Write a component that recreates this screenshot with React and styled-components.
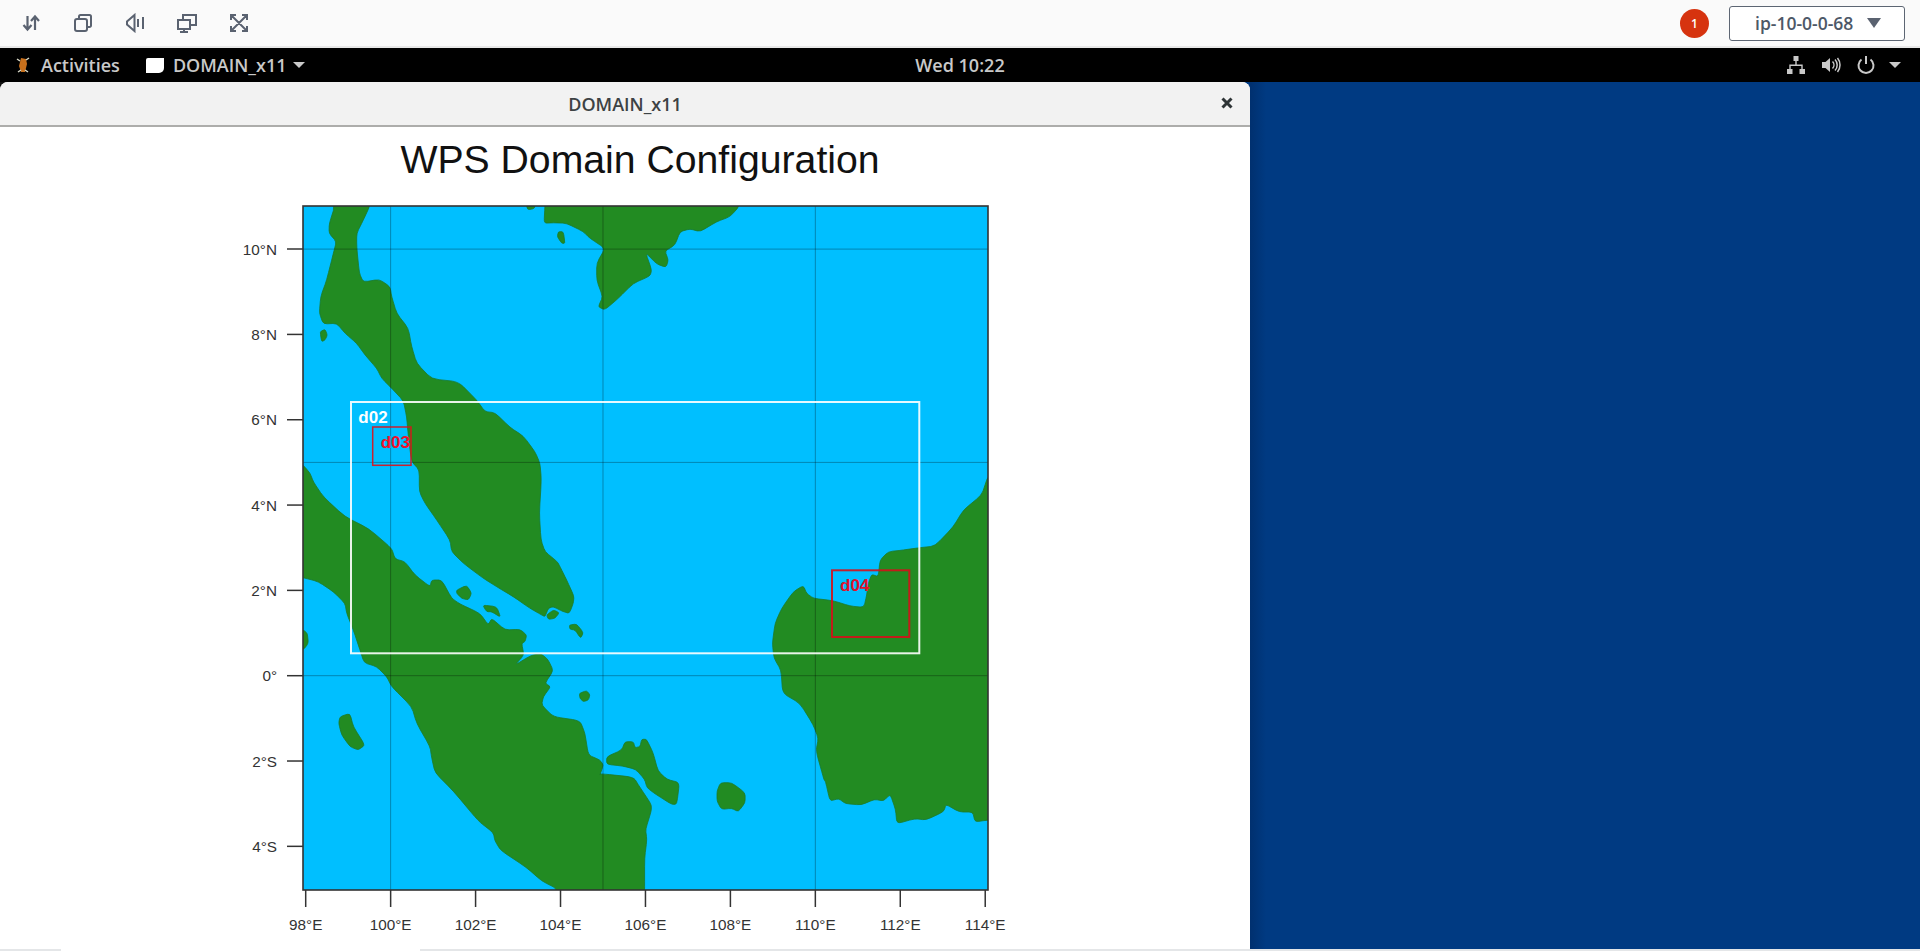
import styled, { createGlobalStyle } from 'styled-components';

const GlobalStyle = createGlobalStyle`
    html, body {
        margin: 0;
        padding: 0;
        height: 100%;
        overflow: hidden;
        background: #fff;
        font-family: "Open Sans", "Liberation Sans", sans-serif;
    }
`;

// crop origin + scale the coastlines were traced in, turned into page pixels
const from = (ox, oy, sx, sy, pts) => pts.map(([x, y]) => [ox + x / sx, oy + y / sy]);
const a = pts => from(220, 190, 3, 3, pts);
const b = pts => from(220, 480, 3, 3, pts);
const c = pts => from(600, 190, 3, 3, pts);
const d = pts => from(600, 480, 3, 3, pts);
const e = pts => from(220, 751, 3, 3, pts);
const f = pts => from(600, 751, 2.24, 3, pts);

// only softens the traced corners, so small islands keep their size
const toPath = pts => {
    const t = 0.28;
    const lerp = (p, q, k) => `${(p[0] + (q[0] - p[0]) * k).toFixed(1)} ${(p[1] + (q[1] - p[1]) * k).toFixed(1)}`;
    let path = '';
    pts.forEach((p, i) => {
        const prev = pts[(i - 1 + pts.length) % pts.length];
        const next = pts[(i + 1) % pts.length];
        path += `${i ? 'L' : 'M'}${lerp(p, prev, t)}Q${p[0].toFixed(1)} ${p[1].toFixed(1)} ${lerp(p, next, t)}`;
    });
    return path + 'Z';
};

const land = [
    // Malay peninsula
    [
        [300, 150],
        ...a([[345, 47], [328, 100], [327, 130], [349, 155], [340, 190], [320, 270], [302, 320], [298, 370], [310, 402], [350, 400], [375, 430], [410, 460], [435, 495], [470, 535], [485, 565], [520, 600], [550, 632], [560, 680], [565, 740], [575, 815], [598, 840]]),
        ...b([[598, 35], [615, 70], [650, 120], [690, 180], [695, 215], [730, 250], [790, 295], [830, 320], [880, 350], [930, 385], [965, 405], [975, 410], [985, 385], [1000, 380], [1030, 395], [1048, 400], [1060, 370], [1062, 348], [1040, 300], [1020, 260], [1012, 245], [975, 215], [963, 180], [958, 100], [964, 0]]),
        ...a([[960, 820], [945, 785], [910, 738], [870, 712], [825, 668], [795, 665], [770, 630], [715, 575], [635, 567], [590, 520], [575, 470], [565, 415], [530, 370], [515, 320], [510, 290], [478, 268], [430, 276], [418, 250], [410, 170], [410, 130], [430, 90], [450, 47]]),
        [380, 150],
    ],
    // Sumatra
    [
        [260, 440], [303, 465], [310, 473],
        ...b([[280, 5], [310, 50], [375, 110], [445, 145], [515, 205], [525, 237], [555, 245], [585, 285], [630, 320], [635, 300], [665, 300], [695, 355], [720, 372], [780, 400], [805, 435], [815, 415], [855, 450], [900, 448], [920, 465], [915, 485], [905, 490], [912, 525], [885, 555], [935, 525], [965, 522], [985, 540], [1000, 572], [975, 610], [992, 620], [970, 650], [965, 675], [1000, 710], [1080, 722], [1095, 760], [1105, 825], [1140, 840], [1150, 855], [1140, 885]]),
        ...f([[0, 68], [75, 78], [90, 110], [115, 160], [115, 180], [102, 235], [105, 265], [100, 320], [100, 418]]),
        [644, 960], [558, 960],
        ...e([[1015, 415], [965, 390], [920, 350], [842, 298], [825, 270], [820, 245], [775, 210], [700, 120], [645, 65], [635, 20]]),
        ...b([[630, 800], [590, 730], [575, 680], [515, 620], [500, 590], [470, 560], [432, 548], [420, 510], [400, 450], [380, 400], [375, 370], [340, 335], [295, 305], [250, 293]]),
        [260, 570],
    ],
    // Borneo
    [
        [1060, 440],
        ...d([[1165, -10], [1160, 0], [1145, 45], [1090, 90], [1060, 140], [1005, 198], [960, 203], [910, 210], [865, 215], [840, 240], [835, 290], [815, 283], [805, 310], [800, 345], [792, 382], [750, 378], [700, 362], [640, 355], [620, 340], [610, 317], [580, 335], [545, 385], [525, 430], [517, 490], [522, 535], [543, 570], [548, 640], [600, 670], [640, 735], [655, 775], [648, 812], [672, 900]]),
        ...f([[505, 90], [515, 150], [535, 143], [550, 158], [585, 162], [615, 145], [635, 150], [650, 130], [662, 175], [665, 218], [705, 203], [730, 207], [770, 182], [775, 160], [805, 183], [835, 183], [840, 213], [868, 207]]),
        [1060, 820],
    ],
    // Indochina, top edge
    [
        [545, 150],
        ...a([[975, 47], [972, 100], [1000, 98], [1040, 100], [1090, 125], [1110, 145], [1155, 175], [1130, 220], [1130, 270], [1148, 320], [1135, 350], [1150, 358]]),
        ...c([[20, 355], [55, 325], [100, 280], [150, 258], [155, 240], [137, 188], [170, 222], [198, 232], [205, 210], [195, 183], [225, 165], [240, 125], [270, 117], [300, 125], [350, 95], [390, 80], [420, 47]]),
        [740, 150],
    ],
    // Bangka
    [
        ...d([[20, 830], [65, 810], [75, 785], [100, 785], [105, 803], [120, 800], [125, 778], [140, 778], [160, 820]]),
        ...f([[130, 60], [150, 85], [178, 95], [172, 160], [160, 160], [125, 130], [105, 110], [100, 85], [80, 55], [50, 45], [15, 40]]),
    ],
    f([[270, 95], [295, 95], [325, 125], [325, 155], [310, 182], [295, 172], [272, 175], [262, 150], [262, 120]]),
    b([[360, 710], [390, 700], [400, 740], [435, 795], [415, 810], [390, 800], [365, 765], [356, 730]]),
    b([[710, 330], [740, 316], [755, 340], [745, 360], [725, 355], [710, 340]]),
    b([[788, 375], [830, 380], [842, 412], [815, 395], [800, 395]]),
    b([[980, 405], [1000, 390], [1018, 398], [1005, 415], [985, 418]]),
    b([[1048, 435], [1070, 432], [1090, 458], [1082, 475], [1065, 450], [1050, 448]]),
    b([[1078, 640], [1100, 632], [1110, 645], [1105, 660], [1090, 665], [1080, 655]]),
    b([[200, 450], [250, 450], [262, 460], [265, 490], [250, 510], [200, 510]]),
    a([[1015, 125], [1030, 125], [1035, 160], [1025, 160], [1012, 140]]),
    a([[915, 20], [922, 60], [945, 55], [945, 20]]),
    a([[300, 425], [315, 418], [322, 435], [315, 450], [305, 455]]),
];

const lonX = lon => 305.7 + (lon - 98) * 42.47;
const latY = lat => 675.7 - lat * 42.66;
const lonTicks = [98, 100, 102, 104, 106, 108, 110, 112, 114];
const latTicks = [
    [10, '10°N'], [8, '8°N'], [6, '6°N'], [4, '4°N'], [2, '2°N'],
    [0, '0°'], [-2, '2°S'], [-4, '4°S'],
];

const Page = styled.div`
    width: 1920px;
    height: 951px;
    display: flex;
    flex-direction: column;
    overflow: hidden;
`;

const Toolbar = styled.header`
    height: 46px;
    flex: none;
    display: flex;
    align-items: center;
    padding: 0 15px 0 5px;
    background: #fafafa;
    border-bottom: 2px solid #e8e8e8;
`;

const ToolButton = styled.button`
    width: 52px;
    height: 40px;
    padding: 0;
    border: 0;
    background: none;
    display: flex;
    align-items: center;
    justify-content: center;
    color: #5a6270;
`;

const ToolIcon = styled.svg`
    width: 20px;
    height: 20px;
    fill: none;
    stroke: currentColor;
    stroke-width: 2;
`;

const Spacer = styled.div`
    flex: 1;
`;

const Badge = styled.span`
    width: 29px;
    height: 29px;
    margin-right: 20px;
    border-radius: 50%;
    background: #d6330f;
    color: #fff;
    font-size: 12px;
    font-weight: 600;
    display: flex;
    align-items: center;
    justify-content: center;
`;

const HostSelect = styled.div`
    width: 176px;
    height: 35px;
    box-sizing: border-box;
    border: 1px solid #5d6673;
    border-radius: 3px;
    background: #fff;
    color: #4d5867;
    font-size: 17.5px;
    font-weight: 600;
    display: flex;
    align-items: center;
    padding-left: 25px;
    gap: 14px;
`;

const HostCaret = styled.span`
    width: 0;
    height: 0;
    border-left: 7px solid transparent;
    border-right: 7px solid transparent;
    border-top: 10px solid #5a6270;
`;

const ShellBar = styled.div`
    height: 34px;
    flex: none;
    display: grid;
    grid-template-columns: 1fr auto 1fr;
    align-items: center;
    background: #000;
    color: #c9c9c9;
    font-size: 18px;
    font-weight: 600;
`;

const ShellLeft = styled.div`
    display: flex;
    align-items: center;
    padding-left: 16px;
`;

const ShellRight = styled.div`
    display: flex;
    align-items: center;
    justify-content: flex-end;
    gap: 15px;
    padding-right: 19px;
`;

const ShellLabel = styled.span`
    margin-left: ${p => p.$gap || 0}px;
`;

const AppSquare = styled.span`
    width: 18px;
    height: 15px;
    margin-left: 26px;
    background: #fff;
    border-radius: 2px 0 5px 0;
`;

const ShellCaret = styled.span`
    width: 0;
    height: 0;
    margin-left: ${p => p.$gap ?? 7}px;
    border-left: 6px solid transparent;
    border-right: 6px solid transparent;
    border-top: 6px solid #c9c9c9;
`;

const ShellIcon = styled.svg`
    width: 20px;
    height: 20px;
    color: #c9c9c9;
`;

const Desktop = styled.div`
    flex: 1;
    display: flex;
    min-height: 0;
    background: linear-gradient(90deg, #111 0 20px, #003a82 20px);
`;

const AppWindow = styled.section`
    width: 1250px;
    display: flex;
    flex-direction: column;
    background: #fff;
    border-radius: 8px 8px 0 0;
    overflow: hidden;
`;

const TitleBar = styled.div`
    height: 43px;
    flex: none;
    position: relative;
    display: flex;
    align-items: center;
    justify-content: center;
    background: #f2f2f2;
    border-bottom: 2px solid #adadab;
    color: #3d4244;
    font-size: 18px;
    font-weight: 600;
`;

const CloseIcon = styled.svg`
    position: absolute;
    right: 17px;
    top: 15px;
    width: 12px;
    height: 12px;
    stroke: #2e3436;
    stroke-width: 3;
`;

const PlotTitle = styled.h1`
    height: 63px;
    margin: 0;
    padding-left: 30px;
    box-sizing: border-box;
    text-align: center;
    font-family: "Liberation Sans", Arial, sans-serif;
    font-size: 39.2px;
    font-weight: 400;
    line-height: 66px;
    color: #111;
`;

const Plot = styled.svg`
    display: block;
    width: 800px;
    height: 750px;
    margin-left: 220px;
`;

const Ocean = styled.rect`
    fill: #00bfff;
`;

const Land = styled.path`
    fill: #228b22;
    stroke: #1c7a2a;
    stroke-width: 0.8;
    stroke-linejoin: round;
`;

const GridLine = styled.line`
    stroke: #000;
    stroke-opacity: 0.3;
    stroke-width: 1;
`;

const Tick = styled.line`
    stroke: #333;
    stroke-width: 1.5;
`;

const AxisLabel = styled.text`
    font-family: "Liberation Sans", Arial, sans-serif;
    font-size: 15.3px;
    fill: #333;
`;

const DomainBox = styled.rect`
    fill: none;
    stroke: ${p => p.$color};
    stroke-width: ${p => p.$width || 1.5};
    stroke-opacity: 0.9;
`;

const DomainLabel = styled.text`
    font-family: "Liberation Sans", Arial, sans-serif;
    font-size: 17px;
    font-weight: 700;
    fill: ${p => p.$color};
`;

const Frame = styled.rect`
    fill: none;
    stroke: #333;
    stroke-width: 1.6;
`;

const BlueSide = styled.div`
    flex: 1;
    background: linear-gradient(90deg, #00306f, #003a82 16px);
`;

const TaskStrip = styled.div`
    height: 2px;
    flex: none;
    background: #e4e6e8;
    padding-left: 61px;
`;

const TaskTab = styled.div`
    width: 359px;
    height: 2px;
    background: #fff;
`;

const App = () => {
    return (
        <Page>
            <GlobalStyle />
            <Toolbar>
                <ToolButton>
                    <ToolIcon viewBox="0 0 20 20">
                        <path d="M6.5 3v13M2.5 12l4 4.5 4-4.5M14 17V4M10 8l4-4.5L18 8" strokeWidth="2.2" />
                    </ToolIcon>
                </ToolButton>
                <ToolButton>
                    <ToolIcon viewBox="0 0 20 20">
                        <rect x="2" y="6" width="12" height="12" rx="2" />
                        <path d="M6 6V3.500a1.500 1.500 0 0 1 1.500-1.500h9A1.500 1.500 0 0 1 18 3.500v9a1.500 1.500 0 0 1-1.500 1.500H14" />
                    </ToolIcon>
                </ToolButton>
                <ToolButton>
                    <ToolIcon viewBox="0 0 20 20">
                        <path d="M9.500 2v16L2 11.500v-3zM13 6v8M18 4v12" />
                    </ToolIcon>
                </ToolButton>
                <ToolButton>
                    <ToolIcon viewBox="0 0 20 20">
                        <path d="M6 6V2h13v10h-6" />
                        <rect x="1" y="7" width="12" height="9" />
                        <path d="M7 16v3M3 19h8" />
                    </ToolIcon>
                </ToolButton>
                <ToolButton>
                    <ToolIcon viewBox="0 0 20 20">
                        <path d="M2 7V2h5M13 2h5v5M18 13v5h-5M7 18H2v-5M3 3l14 14M17 3L3 17" />
                    </ToolIcon>
                </ToolButton>
                <Spacer />
                <Badge>1</Badge>
                <HostSelect>
                    ip-10-0-0-68
                    <HostCaret />
                </HostSelect>
            </Toolbar>

            <ShellBar>
                <ShellLeft>
                    <svg width="14" height="18" viewBox="0 0 14 18">
                        <path d="M5 2l5 1 1 5-2 8-4 0-2-6z" fill="#c8701c" />
                        <path d="M1 3l3 2M13 2l-3 2M2 16l3-2M12 16l-3-2" stroke="#d8d8c8" strokeWidth="1.5" />
                    </svg>
                    <ShellLabel $gap={11}>Activities</ShellLabel>
                    <AppSquare />
                    <ShellLabel $gap={9}>DOMAIN_x11</ShellLabel>
                    <ShellCaret />
                </ShellLeft>
                <span>Wed 10:22</span>
                <ShellRight>
                    <ShellIcon viewBox="0 0 20 20" fill="currentColor">
                        <path d="M7.500 1h5v5h-5zM1 14h5.500v5H1zM13.500 14H19v5h-5.500zM9.300 6h1.400v3.500h6v4.500h-1.400v-3.100H4.700V14H3.300V9.500h6z" />
                    </ShellIcon>
                    <ShellIcon viewBox="0 0 20 20" fill="currentColor">
                        <path d="M1 7h3.500L9 3v14l-4.500-4H1z" />
                        <path d="M11.500 6.500a5 5 0 0 1 0 7M14 4.500a8 8 0 0 1 0 11M16.500 3a11 11 0 0 1 0 14" fill="none" stroke="currentColor" strokeWidth="1.500" />
                    </ShellIcon>
                    <ShellIcon viewBox="0 0 20 20" fill="none" stroke="currentColor" strokeWidth="2">
                        <path d="M10 1v8M5.500 4.500a7.500 7.500 0 1 0 9 0" />
                    </ShellIcon>
                    <ShellCaret $gap={-2} />
                </ShellRight>
            </ShellBar>

            <Desktop>
                <AppWindow>
                    <TitleBar>
                        DOMAIN_x11
                        <CloseIcon viewBox="0 0 12 12">
                            <path d="M1.500 1.500l9 9M10.500 1.500l-9 9" />
                        </CloseIcon>
                    </TitleBar>
                    <PlotTitle>WPS Domain Configuration</PlotTitle>
                    <Plot viewBox="220 190 800 750">
                        <defs>
                            <clipPath id="map-area">
                                <rect x="303" y="206" width="685" height="684" />
                            </clipPath>
                        </defs>
                        <Ocean x="303" y="206" width="685" height="684" />
                        <g clipPath="url(#map-area)">
                            {land.map((pts, i) => (
                                <Land key={i} d={toPath(pts)} />
                            ))}
                        </g>
                        {[100, 105, 110].map(lon => (
                            <GridLine key={lon} x1={lonX(lon)} x2={lonX(lon)} y1="206" y2="890" />
                        ))}
                        {[10, 5, 0].map(lat => (
                            <GridLine key={lat} x1="303" x2="988" y1={latY(lat)} y2={latY(lat)} />
                        ))}
                        <DomainBox $color="#fff" $width={2} x="351" y="402" width="568.300" height="251.300" />
                        <DomainBox $color="#e0101a" x="372.700" y="427" width="38.300" height="38.300" />
                        <DomainBox $color="#d4101a" $width={2} x="832" y="570.300" width="77.300" height="66.700" />
                        <DomainLabel $color="#fff" x="358.300" y="422.700">d02</DomainLabel>
                        <DomainLabel $color="#f0102a" x="380.700" y="447.700">d03</DomainLabel>
                        <DomainLabel $color="#e0102a" x="840" y="591">d04</DomainLabel>
                        <Frame x="303" y="206" width="685" height="684" />
                        {latTicks.map(([lat, text]) => (
                            <g key={text}>
                                <Tick x1="287" x2="303" y1={latY(lat)} y2={latY(lat)} />
                                <AxisLabel x="277" y={latY(lat) + 5.500} textAnchor="end">{text}</AxisLabel>
                            </g>
                        ))}
                        {lonTicks.map(lon => (
                            <g key={lon}>
                                <Tick x1={lonX(lon)} x2={lonX(lon)} y1="890" y2="907" />
                                <AxisLabel x={lonX(lon)} y="929.500" textAnchor="middle">{lon}°E</AxisLabel>
                            </g>
                        ))}
                    </Plot>
                </AppWindow>
                <BlueSide />
            </Desktop>
            <TaskStrip>
                <TaskTab />
            </TaskStrip>
        </Page>
    );
};

export default App;
